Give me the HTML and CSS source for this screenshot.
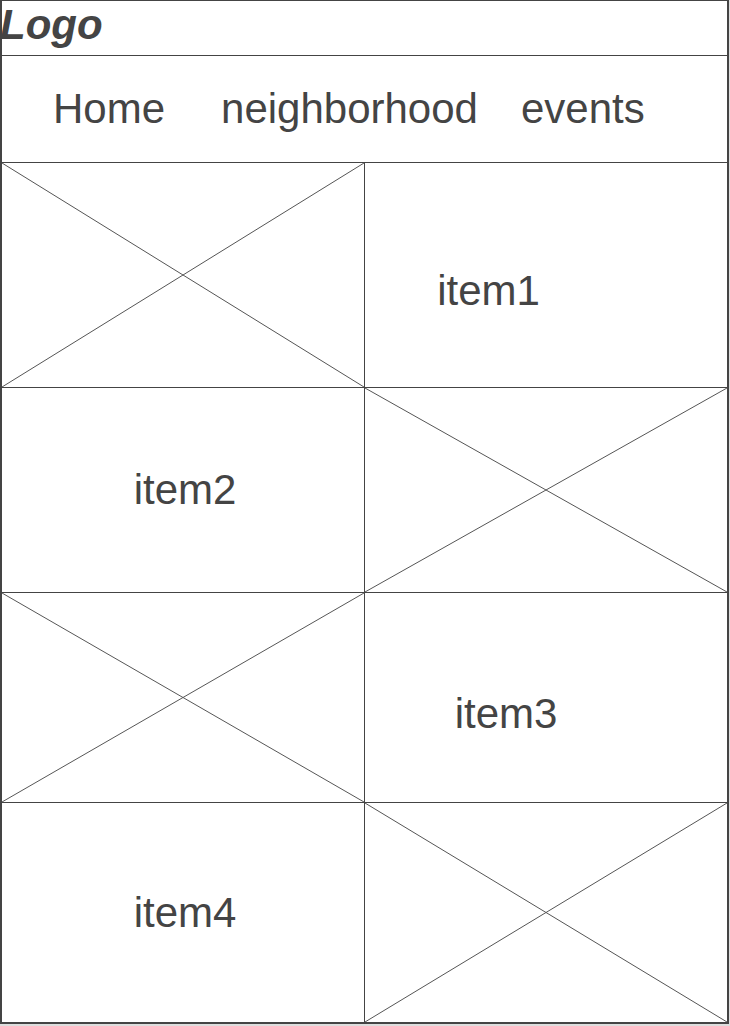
FILE: index.html
```html
<!DOCTYPE html>
<html>
<head>
<meta charset="utf-8">
<link rel="stylesheet" href="styles.css">
</head>
<body>
<div class="page">
  <header class="header"><span class="logo">Logo</span></header>
  <nav class="nav">
    <span class="nav-item home">Home</span>
    <span class="nav-item hood">neighborhood</span>
    <span class="nav-item events">events</span>
  </nav>
  <div class="row row1">
    <div class="cell left img">
      <svg viewBox="0 0 100 100" preserveAspectRatio="none"><line x1="0" y1="0" x2="100" y2="100"/><line x1="100" y1="0" x2="0" y2="100"/></svg>
    </div>
    <div class="cell text t1"><span>item1</span></div>
  </div>
  <div class="row row2">
    <div class="cell left text tl"><span>item2</span></div>
    <div class="cell img">
      <svg viewBox="0 0 100 100" preserveAspectRatio="none"><line x1="0" y1="0" x2="100" y2="100"/><line x1="100" y1="0" x2="0" y2="100"/></svg>
    </div>
  </div>
  <div class="row row3">
    <div class="cell left img">
      <svg viewBox="0 0 100 100" preserveAspectRatio="none"><line x1="0" y1="0" x2="100" y2="100"/><line x1="100" y1="0" x2="0" y2="100"/></svg>
    </div>
    <div class="cell text t3"><span>item3</span></div>
  </div>
  <div class="row row4">
    <div class="cell left text tl"><span>item4</span></div>
    <div class="cell img">
      <svg viewBox="0 0 100 100" preserveAspectRatio="none"><line x1="0" y1="0" x2="100" y2="100"/><line x1="100" y1="0" x2="0" y2="100"/></svg>
    </div>
  </div>
</div>
</body>
</html>
```
FILE: styles.css
```css
html, body {
  margin: 0;
  padding: 0;
}
body {
  background: #dedede;
  font-family: "Liberation Sans", Arial, sans-serif;
  color: #444;
}
.page {
  box-sizing: border-box;
  width: 729px;
  height: 1024px;
  background: #fff;
  border-top: 1px solid #444;
  border-left: 2px solid #444;
  border-right: 2px solid #444;
  border-bottom: 2px solid #444;
  display: flex;
  flex-direction: column;
}
.header {
  flex: none;
  height: 54px;
  border-bottom: 1px solid #444;
  display: flex;
  align-items: flex-start;
  margin-left: -2px;
}
.logo {
  font-size: 42px;
  line-height: 1;
  font-weight: bold;
  font-style: italic;
  margin-top: 3px;
  color: #444;
}
.nav {
  flex: none;
  height: 106px;
  border-bottom: 1px solid #444;
  display: flex;
  align-items: center;
}
.nav-item {
  font-size: 42px;
  line-height: 1;
}
.home { margin-left: 51px; }
.hood { margin-left: 56px; }
.events { margin-left: 43px; }
.row {
  flex: none;
  display: grid;
  grid-template-columns: 363px minmax(0, 1fr);
  grid-template-rows: minmax(0, 1fr);
  border-bottom: 1px solid #444;
  overflow: hidden;
}
.row1 { height: 224px; }
.row2 { height: 204px; }
.row3 { height: 209px; }
.row4 { height: 219px; border-bottom: none; }
.cell {
  min-width: 0;
  min-height: 0;
  overflow: hidden;
}
.left {
  border-right: 1px solid #444;
}
.img svg {
  display: block;
  width: 100%;
  height: 100%;
}
.img line {
  stroke: #555;
  stroke-width: 1;
  vector-effect: non-scaling-stroke;
}
.text {
  display: flex;
  align-items: center;
  justify-content: center;
  font-size: 42px;
  line-height: 1;
}
.tl {
  padding-left: 4px;
}
.t1 {
  padding-top: 31px;
  padding-right: 115px;
}
.t3 {
  padding-top: 32px;
  padding-right: 80px;
}
```
